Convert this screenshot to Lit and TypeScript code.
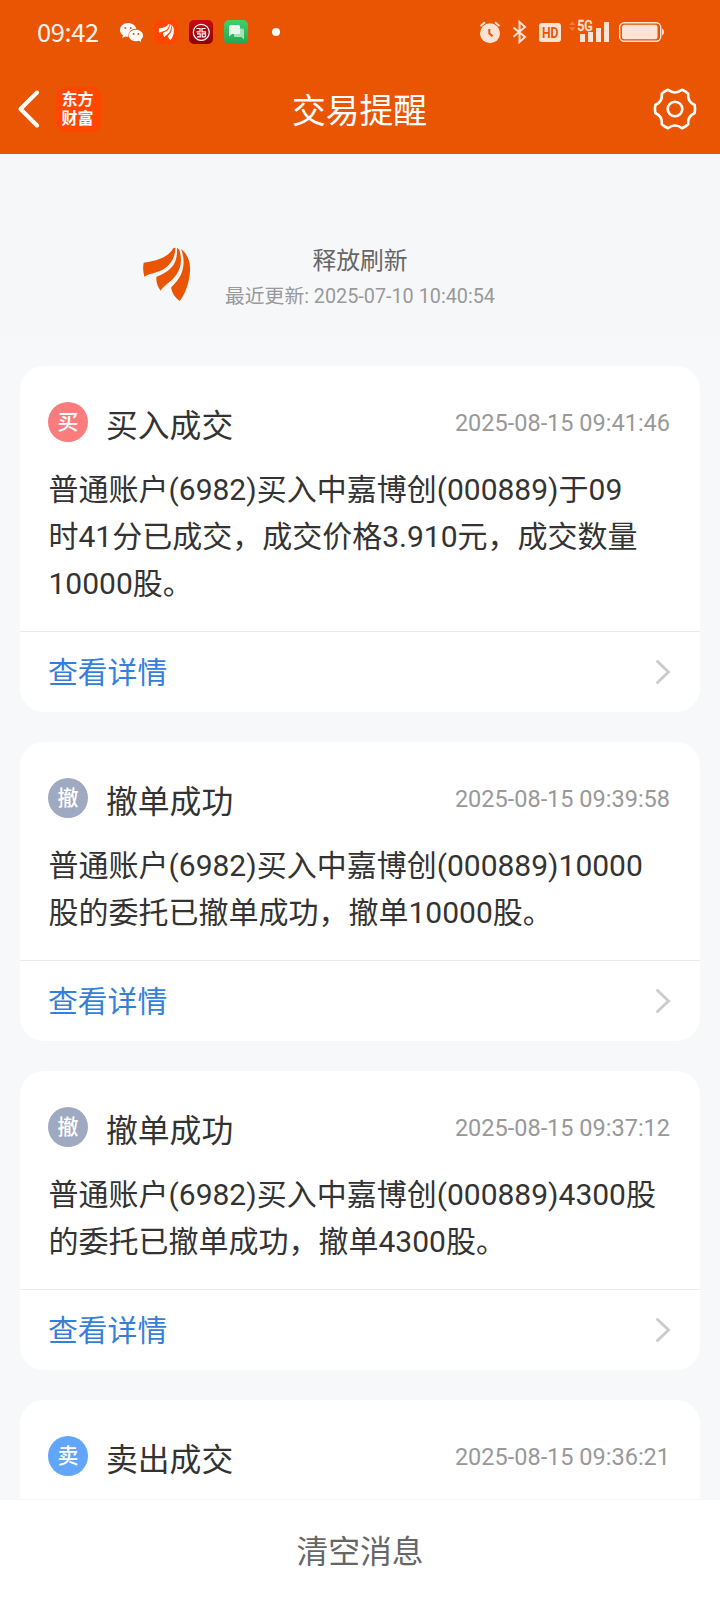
import { LitElement, html, css, svg, nothing } from "lit";
import { customElement, property } from "lit/decorators.js";

const feathers = svg`
  <path d="M16 57C42 53 88 46 105 13L111 12C112 38 98 64 72 79C50 89 32 90 18 99Q12 78 16 57Z"/>
  <path d="M116 12L123 18C131 45 130 68 115 92C98 117 80 121 67 141C58 130 53 116 54 100C76 90 97 80 109 57C115 44 117 30 116 12Z"/>
  <path d="M128 16C150 33 157 58 155 85C152 120 141 150 124 172C110 162 101 148 98 132C108 120 122 108 130 87C138 65 138 40 128 16Z"/>`;

@customElement("status-bar")
export class StatusBar extends LitElement {
  static styles = css`
    :host { display: flex; align-items: center; justify-content: space-between; height: 64px; padding: 0 56px 0 37px; color: #fff4ec; }
    .left, .right { display: flex; align-items: center; }
    .time { font: 400 25.500px/30px "Noto Sans CJK SC", sans-serif; letter-spacing: -.4px; width: 82px; padding-bottom: 3px; }
    svg { display: block; flex: none; }
    .app { margin-left: 11px; }
    .first { margin-left: 10px; }
    .dot { width: 8px; height: 8px; border-radius: 4px; background: #fff; margin-left: 24px; }
    .net { font: 500 14px Roboto, sans-serif; }
    .hd { font: 700 14px Roboto, sans-serif; }
  `;
  render() {
    return html`
      <div class="left">
        <div class="time">09:42</div>
        <svg width="25" height="24" viewBox="119 20 25 24">
          <path fill="#fff" d="M128 23C123.500 23 120 26 120 30C120 32.200 121.200 34 123 35.300L122.300 38L125.300 36.500C126.500 36.800 127.500 36.900 128.600 36.800C127.500 32 131.500 28.600 136.300 28.700C135.500 25.300 132 23 128 23Z"/>
          <path fill="#fff" d="M136 29.700C131.800 29.700 128.800 32.200 128.800 35.500C128.800 38.800 132 41.200 136 41.200C137 41.200 138 41.100 138.800 40.800L141.200 42L140.700 39.800C142.200 38.800 143 37.200 143 35.500C143 32.200 140 29.700 136 29.700Z"/>
          <g fill="#ea5504"><circle cx="125.300" cy="28" r="1"/><circle cx="130.700" cy="28" r="1"/><circle cx="133.600" cy="34" r="1"/><circle cx="138.400" cy="34" r="1"/></g>
        </svg>
        <svg class="first" width="24" height="24" viewBox="0 0 24 24">
          <rect width="24" height="24" rx="5" fill="#ff4600"/>
          <g fill="#fff" transform="translate(3.200 2.800) scale(.108 .1)">${feathers}</g>
        </svg>
        <svg class="app" width="24" height="24" viewBox="0 0 24 24">
          <defs><linearGradient id="r" x2="0" y2="1"><stop stop-color="#c90a12"/><stop offset="1" stop-color="#8e0009"/></linearGradient></defs>
          <rect width="24" height="24" rx="5" fill="url(#r)"/>
          <circle cx="12.300" cy="12.300" r="8" fill="none" stroke="#fff" stroke-width="1.200"/>
          <path fill="none" stroke="#fff" stroke-width="1.200" d="M7.500 8.500H11V11.800H7.500M16.500 8.500H13V11.800H16.500M8 13.800H11.200V16.800H8M16.500 13.800H13.200V16.800H16.500M16.500 11.500V17"/>
        </svg>
        <svg class="app" width="24" height="24" viewBox="0 0 24 24">
          <defs><linearGradient id="g" x2="0" y2="1"><stop stop-color="#45ce6d"/><stop offset="1" stop-color="#27a550"/></linearGradient></defs>
          <rect width="24" height="24" rx="5" fill="url(#g)"/>
          <path fill="#a5e3b8" d="M10 8.500H18.500Q20 8.500 20 10V19.500L17.500 17H11Q10 17 10 16Z"/>
          <path fill="#e6f8eb" d="M6.500 5H14.500Q16 5 16 6.500V12.500Q16 14 14.500 14H8L5 16.500V6.500Q5 5 6.500 5Z"/>
        </svg>
        <div class="dot"></div>
      </div>
      <svg width="186" height="28" viewBox="478 18 186 28" fill="#fde3d5">
        <circle cx="490" cy="33.300" r="10"/>
        <path d="M480.500 26L485 22.300M499.500 26L495 22.300" fill="none" stroke="#fde3d5" stroke-width="2"/>
        <path d="M489.300 29V33.500L492.500 36.300" fill="none" stroke="#ea5504" stroke-width="2"/>
        <path d="M513.500 27.500L525 37L519.500 42V22L525 27L513.500 36.800" fill="none" stroke="#fde3d5" stroke-width="2"/>
        <rect x="539" y="23" width="22" height="19" rx="3"/>
        <text class="hd" x="542" y="37.500" fill="#ea5504" textLength="16.500" lengthAdjust="spacingAndGlyphs">HD</text>
        <path d="M569 25L572.300 21.200L575.500 25ZM569 27.300L572.300 31L575.500 27.300Z" fill="#f17a39"/>
        <path d="M580 34h5v8h-5zM588 32h5v10h-5zM596 28h5v14h-5zM604 22h5v20h-5z"/>
        <text class="net" x="577.300" y="31" textLength="15.500" lengthAdjust="spacingAndGlyphs" stroke="#fde3d5" stroke-width=".3">5G</text>
        <rect x="619.700" y="22.700" width="41" height="18.600" rx="4.500" fill="none" stroke="#fde3d5" stroke-width="1.400"/>
        <rect x="622" y="24.800" width="35.500" height="14.400" rx="2.500"/>
        <path d="M662 28.500Q664 29 664 32Q664 35 662 35.500Z"/>
      </svg>`;
  }
}

@customElement("nav-bar")
export class NavBar extends LitElement {
  static styles = css`
    :host { display: grid; grid-template-columns: 1fr auto 1fr; align-items: center; height: 90px; padding: 0 22px 0 17px; color: #fff; }
    .left { display: flex; align-items: center; gap: 15.500px; }
    .title { font-size: 33.800px; line-height: 40px; padding: 6px 0 0 4px; }
    .brand { width: 45px; height: 45px; border-radius: 9px; background: #ff4600; box-sizing: border-box; padding: 2px 1px 0 0; display: flex; flex-direction: column; align-items: center; font: 700 16px/19px "Noto Sans CJK SC", sans-serif; }
    .gear { justify-self: end; margin-top: -1px; }
    svg { display: block; }
  `;
  render() {
    return html`
      <div class="left">
        <svg width="23" height="38" viewBox="0 0 23 38"><path d="M20 2.500L3.500 19L20 35.500" fill="none" stroke="#fff" stroke-width="4" stroke-linecap="round" stroke-linejoin="round"/></svg>
        <div class="brand"><span>东方</span><span>财富</span></div>
      </div>
      <div class="title">交易提醒</div>
      <svg class="gear" width="46" height="46" viewBox="-23 -23 46 46" fill="none" stroke="#fff" stroke-width="2.600" stroke-linejoin="round">
        <circle r="7.300"/>
        <path d="M-7 -19.200Q0 -13.800 7 -19.200Q10.500 -17.800 13.200 -15.200Q12.200 -7.500 19.700 -4Q20.400 0 19.700 4Q12.200 7.500 13.200 15.200Q10.500 17.800 7 19.200Q0 13.800 -7 19.200Q-10.500 17.800 -13.200 15.200Q-12.200 7.500 -19.700 4Q-20.400 0 -19.700 -4Q-12.200 -7.500 -13.200 -15.200Q-10.500 -17.800 -7 -19.200Z"/>
      </svg>`;
  }
}

@customElement("trade-card")
export class TradeCard extends LitElement {
  @property() kind = "buy";
  @property() badge = "";
  @property() heading = "";
  @property() time = "";
  @property() message = "";
  static styles = css`
    :host { display: block; flex: none; background: #fff; border-radius: 24px; }
    .head { display: flex; align-items: center; height: 40px; padding: 36px 30px 0 28px; }
    .badge { width: 40px; height: 40px; border-radius: 20px; color: #fff; font-size: 21px; line-height: 41px; font-weight: 500; text-align: center; }
    .buy { background: #fb7c7d; }
    .cancel { background: #9fa9c1; }
    .sell { background: #61a5fc; }
    .name { margin-left: 18px; font-size: 31.800px; line-height: 40px; padding-top: 7px; flex: 1; color: #333; }
    .time { font-size: 23.500px; line-height: 40px; color: #999; padding-top: 2px; }
    .body { font-size: 30px; line-height: 47px; padding: 24px 20px 24px 28.500px; white-space: pre; color: #333; }
    .more { display: flex; align-items: center; justify-content: space-between; height: 80px; border-top: 1px solid #ebebeb; padding: 0 29px 0 28px; color: #347fd9; font-size: 29.800px; }
    .link { padding-bottom: 4px; }
    .tail { height: 80px; }
    svg { display: block; }
  `;
  render() {
    return html`
      <div class="head">
        <div class="badge ${this.kind}">${this.badge}</div>
        <div class="name">${this.heading}</div>
        <div class="time">${this.time}</div>
      </div>
      ${this.message
        ? html`<div class="body">${this.message}</div>
            <div class="more">
              <span class="link">查看详情</span>
              <svg width="16" height="26" viewBox="0 0 16 26"><path d="M2.500 2.500L13.500 13L2.500 23.500" fill="none" stroke="#ccc" stroke-width="2.900" stroke-linecap="round"/></svg>
            </div>`
        : html`<div class="tail">${nothing}</div>`}`;
  }
}

const items = [
  { kind: "buy", badge: "买", heading: "买入成交", time: "2025-08-15 09:41:46", message: "普通账户(6982)买入中嘉博创(000889)于09\n时41分已成交，成交价格3.910元，成交数量\n10000股。" },
  { kind: "cancel", badge: "撤", heading: "撤单成功", time: "2025-08-15 09:39:58", message: "普通账户(6982)买入中嘉博创(000889)10000\n股的委托已撤单成功，撤单10000股。" },
  { kind: "cancel", badge: "撤", heading: "撤单成功", time: "2025-08-15 09:37:12", message: "普通账户(6982)买入中嘉博创(000889)4300股\n的委托已撤单成功，撤单4300股。" },
  { kind: "sell", badge: "卖", heading: "卖出成交", time: "2025-08-15 09:36:21", message: "" },
];

@customElement("app-root")
export class AppRoot extends LitElement {
  static styles = css`
    :host { display: flex; flex-direction: column; height: 1600px; overflow: hidden; background: #f7f8fa; font-family: Roboto, "Noto Sans CJK SC", sans-serif; font-weight: 400; }
    .top { flex: none; background: #ea5504; }
    .refresh { flex: none; display: grid; grid-template-columns: 1fr auto 1fr; box-sizing: border-box; height: 182px; padding-top: 90px; background: #f6f7f9; }
    .logo { display: block; justify-self: end; margin: 3px 34px 0 0; fill: #ea5504; }
    .tip { text-align: center; }
    .tip-title { font-size: 23.800px; line-height: 35px; color: #666; }
    .tip-time { font-size: 19.800px; line-height: 35px; color: #999; }
    .list { flex: 1; min-height: 0; overflow: hidden; display: flex; flex-direction: column; gap: 30px; padding: 30px 20px 0; }
    .clear { flex: none; height: 101px; box-sizing: border-box; background: #fff; border-top: 1px solid #f7f7f7; text-align: center; font-size: 31.800px; line-height: 105px; color: #666; }
  `;
  render() {
    return html`
      <div class="top"><status-bar></status-bar><nav-bar></nav-bar></div>
      <div class="refresh">
        <svg class="logo" width="48" height="54.700" viewBox="14 10 144 164">${feathers}</svg>
        <div class="tip">
          <div class="tip-title">释放刷新</div>
          <div class="tip-time">最近更新: 2025-07-10 10:40:54</div>
        </div>
      </div>
      <div class="list">
        ${items.map((i) => html`<trade-card .kind=${i.kind} .badge=${i.badge} .heading=${i.heading} .time=${i.time} .message=${i.message}></trade-card>`)}
      </div>
      <div class="clear">清空消息</div>`;
  }
}
